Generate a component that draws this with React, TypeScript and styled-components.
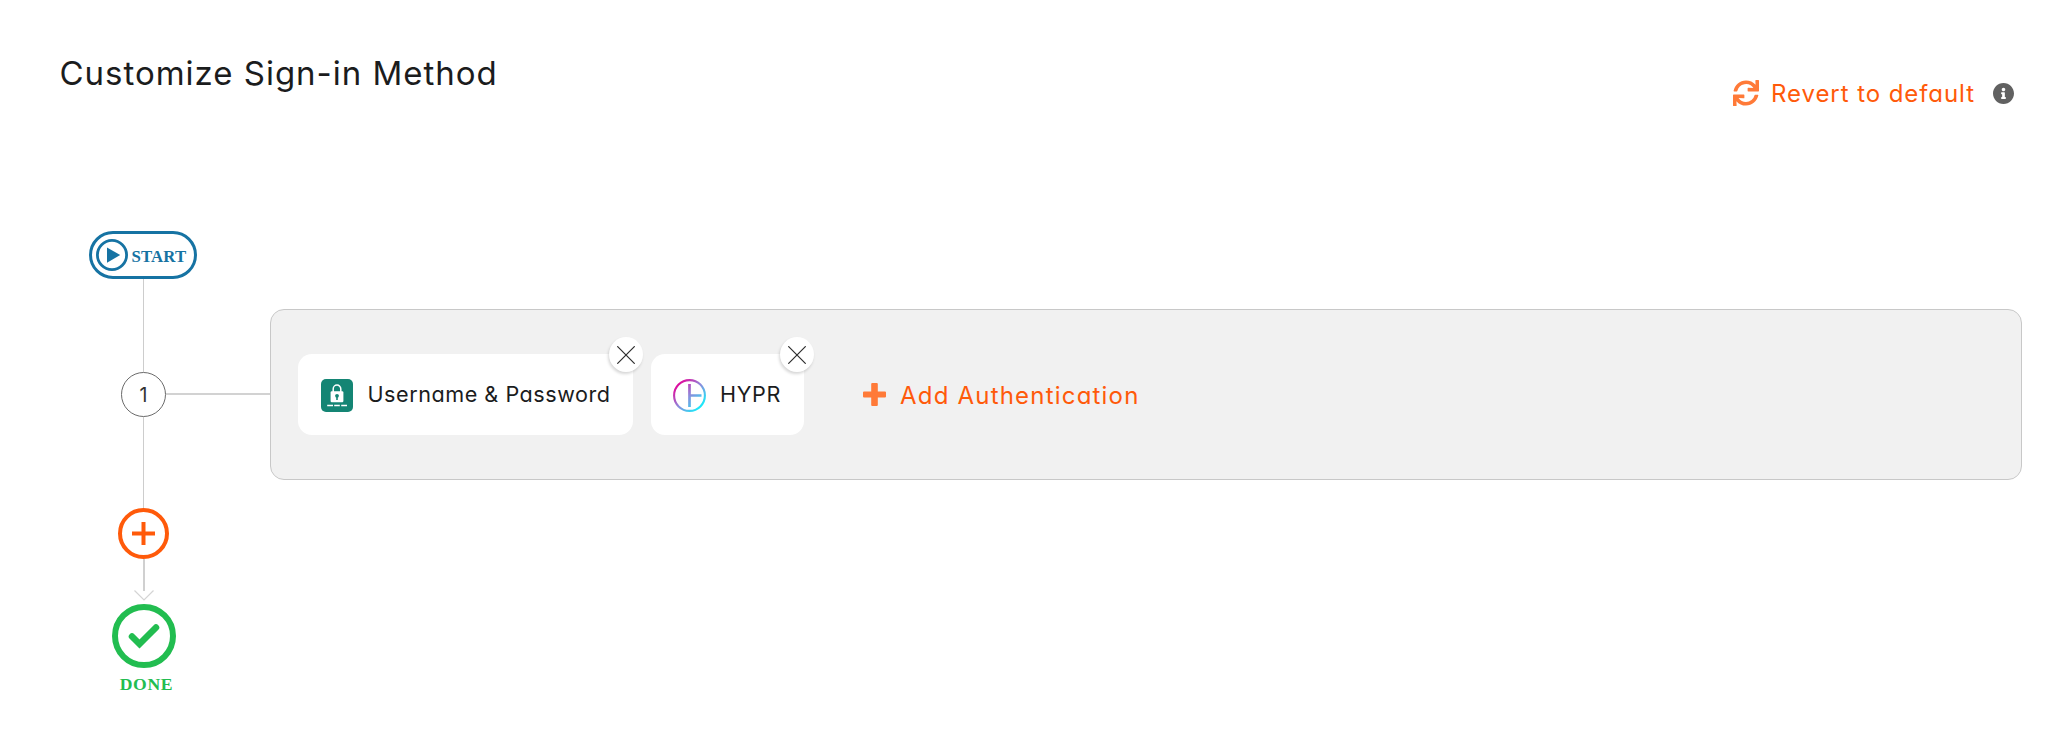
import React from "react";
import styled, { createGlobalStyle } from "styled-components";

const GlobalStyle = createGlobalStyle`
  *, *::before, *::after { box-sizing: border-box; }
  body {
    margin: 0;
    background: #fff;
    font-family: Inter, "Liberation Sans", sans-serif;
    font-feature-settings: "cv11" 1;
    color: #1b1c1d;
  }
  svg { display: block; flex: none; }
`;

const Page = styled.main`
  width: 2072px;
  height: 740px;
  padding: 50px 50px 0 59px;
  overflow: hidden;
`;

const Header = styled.header`
  display: flex;
  justify-content: space-between;
  align-items: flex-start;
  height: 181px;
`;

const Title = styled.h1`
  margin: 3px 0 0 0.5px;
  font-size: 33px;
  line-height: 40px;
  font-weight: 400;
  letter-spacing: 0.98px;
  white-space: nowrap;
`;

const Actions = styled.div`
  display: flex;
  align-items: center;
  height: 32px;
  margin-top: 27px;
  padding-right: 8px;
`;

const LinkButton = styled.button<{ $gap: number; $width: number }>`
  display: flex;
  align-items: center;
  gap: ${(p) => p.$gap}px;
  width: ${(p) => p.$width}px;
  padding: 0;
  border: 0;
  background: none;
  color: #ff5a0a;
  font: inherit;
  font-size: 24px;
  font-weight: 400;
  line-height: 32px;
  white-space: nowrap;
`;

const Label = styled.span<{ $tracking: number; $drop?: number }>`
  padding-top: ${(p) => p.$drop ?? 0}px;
  letter-spacing: ${(p) => p.$tracking}px;
`;

const Flow = styled.section`
  display: flex;
  flex-direction: column;
`;

const Rail = styled.div`
  display: flex;
  flex-direction: column;
  align-items: center;
  width: 169px;
`;

const StartPill = styled.div`
  display: flex;
  align-items: center;
  gap: 3.5px;
  width: 108px;
  height: 48px;
  margin-right: 1px;
  padding-left: 4px;
  border: 3px solid #1673a3;
  border-radius: 24px;
  color: #1673a3;
`;

const SerifLabel = styled.span<{ $size: number; $tracking: number }>`
  font-family: "Liberation Serif", serif;
  font-weight: 700;
  font-size: ${(p) => p.$size}px;
  line-height: 20px;
  letter-spacing: ${(p) => p.$tracking}px;
`;

const StartText = styled.div`
  padding-top: 3px;
`;

const VLine = styled.div<{ $height: number }>`
  width: 1px;
  height: ${(p) => p.$height}px;
  background: #cdcdcd;
`;

const StepRow = styled.div`
  display: flex;
  align-items: center;
  height: 171px;
`;

const StepRail = styled(Rail)`
  width: 107px;
  padding-left: 62px;
`;

const StepNumber = styled.div`
  display: flex;
  align-items: center;
  justify-content: center;
  width: 45px;
  height: 45px;
  border: 1px solid #6a6a6a;
  border-radius: 50%;
  font-size: 19.5px;
  font-weight: 400;
  color: #333;
`;

const HLine = styled.div`
  width: 104px;
  height: 2px;
  margin-top: -2px;
  background: #d2d2d2;
`;

const Panel = styled.div`
  display: flex;
  align-items: center;
  width: 1752px;
  height: 171px;
  padding-left: 27px;
  border: 1px solid #c8c8c8;
  border-radius: 14px;
  background: #f1f1f1;
`;

const MethodCard = styled.div<{ $width: number; $inset: number }>`
  position: relative;
  display: flex;
  align-items: center;
  gap: 14.5px;
  width: ${(p) => p.$width}px;
  height: 81px;
  margin-right: 18px;
  padding: 2px 0 0 ${(p) => p.$inset}px;
  border-radius: 14px;
  background: #fff;
  font-size: 21.6px;
  line-height: 28px;
  font-weight: 400;
  white-space: nowrap;

  ${Label} {
    margin-top: -3px;
  }
`;

const RemoveButton = styled.button`
  position: absolute;
  top: -17px;
  right: -10px;
  display: flex;
  align-items: center;
  justify-content: center;
  width: 34px;
  height: 35px;
  padding: 0;
  border: 0;
  border-radius: 50%;
  background: #fff;
  box-shadow: -1px 2px 3px rgba(0, 0, 0, 0.16);
`;

const AddSlot = styled.div`
  margin-left: 41px;
`;

const AddStep = styled.button`
  display: flex;
  align-items: center;
  justify-content: center;
  width: 51px;
  height: 51px;
  padding: 0;
  border: 4px solid #ff5a0a;
  border-radius: 50%;
  background: #fff;
`;

const DoneRail = styled(Rail)`
  width: 170px;
`;

const DoneText = styled.div`
  margin: 6px 0 0 5px;
  color: #22bd50;
`;

const RefreshIcon = () => (
  <svg width="26" height="26" viewBox="0 0 512 512" fill="#ff7a38">
    <path d="M440.65 12.57l4 82.77A247.16 247.16 0 0 0 255.83 8C134.73 8 33.91 94.92 12.29 209.82A12 12 0 0 0 24.09 224h49.05a12 12 0 0 0 11.67-9.26 175.91 175.91 0 0 1 317-56.94l-101.46-4.86a12 12 0 0 0-12.57 12v47.41a12 12 0 0 0 12 12H500a12 12 0 0 0 12-12V12a12 12 0 0 0-12-12h-47.37a12 12 0 0 0-11.98 12.57zM255.83 432a175.61 175.61 0 0 1-146-77.8l101.8 4.87a12 12 0 0 0 12.57-12v-47.4a12 12 0 0 0-12-12H12a12 12 0 0 0-12 12V500a12 12 0 0 0 12 12h47.35a12 12 0 0 0 12-12.6l-4.15-82.57A247.17 247.17 0 0 0 255.83 504c121.11 0 221.93-86.92 243.55-201.82a12 12 0 0 0-11.8-14.18h-49.05a12 12 0 0 0-11.67 9.26A175.86 175.86 0 0 1 255.83 432z" />
  </svg>
);

const InfoIcon = () => (
  <svg width="21" height="21" viewBox="8 8 496 496" fill="#616161">
    <path d="M256 8C119.043 8 8 119.083 8 256c0 136.997 111.043 248 248 248s248-111.003 248-248C504 119.083 392.957 8 256 8zm0 110c23.196 0 42 18.804 42 42s-18.804 42-42 42-42-18.804-42-42 18.804-42 42-42zm56 254c0 6.627-5.373 12-12 12h-88c-6.627 0-12-5.373-12-12v-24c0-6.627 5.373-12 12-12h12v-64h-12c-6.627 0-12-5.373-12-12v-24c0-6.627 5.373-12 12-12h64c6.627 0 12 5.373 12 12v100h12c6.627 0 12 5.373 12 12v24z" />
  </svg>
);

const PlayIcon = () => (
  <svg width="32" height="32" viewBox="0 0 32 32">
    <circle cx="16" cy="16" r="14.6" fill="none" stroke="#1673a3" strokeWidth="2.8" />
    <path d="M11 8.5v15.2L24.2 16z" fill="#1673a3" />
  </svg>
);

const PasswordIcon = () => (
  <svg width="32" height="33" viewBox="0 0 32 33">
    <rect width="32" height="33" rx="5" fill="#148574" />
    <path d="M12.2 13V10a3.8 4 0 0 1 7.6 0v3" fill="none" stroke="#fff" strokeWidth="1.5" />
    <rect x="9.6" y="12.2" width="12.8" height="11" rx="1.2" fill="#fff" />
    <circle cx="16" cy="16.8" r="1.9" fill="#148574" />
    <path d="M15.2 17h1.6v4h-1.6z" fill="#148574" />
    <path d="M6.2 26.4h5.8M13.2 26.4h5.6M20.2 26.4H26" stroke="#fff" strokeWidth="1.5" />
  </svg>
);

const HyprIcon = () => (
  <svg width="33" height="33" viewBox="0 0 33 33" fill="none">
    <defs>
      <linearGradient id="hypr" gradientUnits="userSpaceOnUse" x1="5" y1="5" x2="28" y2="28">
        <stop offset="0" stopColor="#e0089c" />
        <stop offset="0.5" stopColor="#8c8cdc" />
        <stop offset="1" stopColor="#18ecfa" />
      </linearGradient>
    </defs>
    <g stroke="url(#hypr)">
      <circle cx="16.5" cy="16.5" r="15.4" strokeWidth="2.1" />
      <path d="M16.5 5v23M17 16.5h11.5" strokeWidth="2.7" />
    </g>
  </svg>
);

const CrossIcon = () => (
  <svg width="18" height="18" viewBox="0 0 18 18" stroke="#2d2d2d" strokeWidth="1.2">
    <path d="M.3.3l17.4 17.4M17.7.3L.3 17.7" />
  </svg>
);

const BoldPlusIcon = () => (
  <svg width="23" height="23" viewBox="0 0 23 23" fill="#ff7a38">
    <path d="M9.2 0h4.6a1 1 0 0 1 1 1v7.6h7.2a1 1 0 0 1 1 1v3.9a1 1 0 0 1-1 1h-7.2V22a1 1 0 0 1-1 1H9.2a1 1 0 0 1-1-1v-7.5H1a1 1 0 0 1-1-1V9.6a1 1 0 0 1 1-1h7.2V1a1 1 0 0 1 1-1z" />
  </svg>
);

const PlusIcon = () => (
  <svg width="23" height="23" viewBox="0 0 23 23" stroke="#ff5a0a" strokeWidth="4">
    <path d="M11.5 0v23M0 11.5h23" />
  </svg>
);

const ArrowDown = () => (
  <svg width="20" height="45" viewBox="0 0 20 45" fill="none">
    <path d="M10 0v32" stroke="#d0d0d0" strokeWidth="2" />
    <path d="M.5 31.5l9.5 9.5 9.5-9.5" stroke="#d4d4d4" strokeWidth="1.2" />
  </svg>
);

const DoneIcon = () => (
  <svg width="64" height="64" viewBox="0 0 64 64" fill="none" stroke="#22bd50">
    <circle cx="32" cy="32" r="29" strokeWidth="6" />
    <path d="M20 32.5l7.5 7.5 16.5-16.5" strokeWidth="6.5" strokeLinecap="round" />
  </svg>
);

interface Method {
  name: string;
  width: number;
  inset: number;
  tracking: number;
  icon: React.ReactNode;
}

const methods: Method[] = [
  { name: "Username & Password", width: 335, inset: 23, tracking: 0.53, icon: <PasswordIcon /> },
  { name: "HYPR", width: 153, inset: 21.5, tracking: 0.7, icon: <HyprIcon /> },
];

export default function App() {
  return (
    <>
      <GlobalStyle />
      <Page>
        <Header>
          <Title>Customize Sign-in Method</Title>
          <Actions>
            <LinkButton $gap={12} $width={260}>
              <RefreshIcon />
              <Label $tracking={0.93} $drop={2}>Revert to default</Label>
            </LinkButton>
            <InfoIcon />
          </Actions>
        </Header>
        <Flow>
          <Rail>
            <StartPill>
              <PlayIcon />
              <StartText>
                <SerifLabel $size={16.8} $tracking={0.15}>START</SerifLabel>
              </StartText>
            </StartPill>
            <VLine $height={30} />
          </Rail>
          <StepRow>
            <StepRail>
              <VLine $height={63} />
              <StepNumber>1</StepNumber>
              <VLine $height={63} />
            </StepRail>
            <HLine />
            <Panel>
              {methods.map((m) => (
                <MethodCard key={m.name} $width={m.width} $inset={m.inset}>
                  {m.icon}
                  <Label $tracking={m.tracking}>{m.name}</Label>
                  <RemoveButton aria-label={`Remove ${m.name}`}>
                    <CrossIcon />
                  </RemoveButton>
                </MethodCard>
              ))}
              <AddSlot>
                <LinkButton $gap={14} $width={280}>
                  <BoldPlusIcon />
                  <Label $tracking={1.2} $drop={2}>Add Authentication</Label>
                </LinkButton>
              </AddSlot>
            </Panel>
          </StepRow>
          <Rail>
            <VLine $height={28} />
            <AddStep aria-label="Add step">
              <PlusIcon />
            </AddStep>
          </Rail>
          <DoneRail>
            <ArrowDown />
            <DoneIcon />
            <DoneText>
              <SerifLabel $size={17.6} $tracking={0.7}>DONE</SerifLabel>
            </DoneText>
          </DoneRail>
        </Flow>
      </Page>
    </>
  );
}
